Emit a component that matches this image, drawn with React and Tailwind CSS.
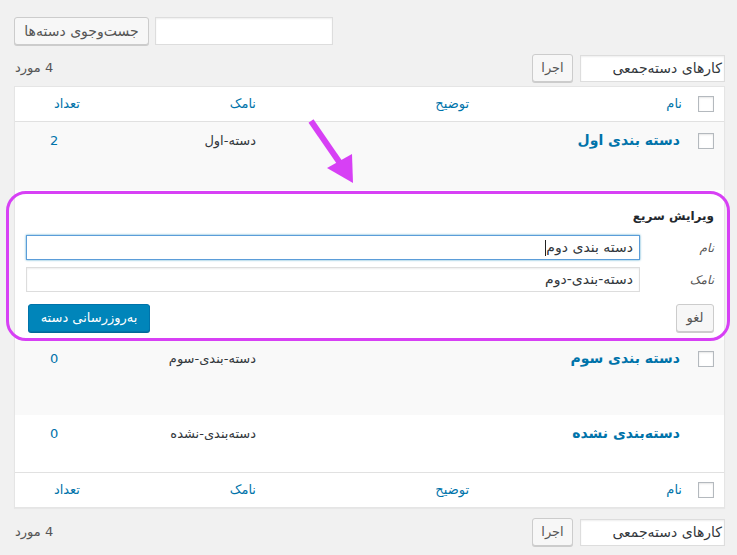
import React from 'react';

const rowGrid = 'grid grid-cols-[35px_210px_213px_176px_1fr]';

function Checkbox() {
  return <span className="block w-[16px] h-[16px] border border-[#b4b9be] bg-white shadow-[inset_0_1px_2px_rgba(0,0,0,0.1)]" />;
}

function HeaderRow({ top }) {
  return (
    <div className={`${rowGrid} h-[35px] items-center text-[13px] text-[#0073aa] ${top ? 'border-b border-[#e1e1e1]' : 'border-t border-[#e1e1e1]'}`}>
      <div className="pr-[10px]"><Checkbox /></div>
      <div className="pr-[7px]">نام</div>
      <div className="pr-[10px]">توضیح</div>
      <div className="pr-[10px]">نامک</div>
      <div className="pr-[10px]">تعداد</div>
    </div>
  );
}

function TermRow({ name, slug, count, bg, height, checkbox = true }) {
  return (
    <div className={`${rowGrid} ${bg} ${height}`}>
      <div className="pr-[10px] pt-[11px]">{checkbox && <Checkbox />}</div>
      <div className="pr-[9px] pt-[8px] text-[14px] font-bold text-[#0073aa]">{name}</div>
      <div />
      <div className="pr-[10px] pt-[9px] text-[13px] text-[#32373c]">{slug}</div>
      <div className="pr-[10px] pt-[9px] text-[13px] text-[#0073aa] text-left pl-[35px]">{count}</div>
    </div>
  );
}

function Tablenav() {
  return (
    <div className="flex items-center justify-between h-[28px]">
      <div className="flex items-center gap-[7px]">
        <div className="w-[145px] h-[27px] bg-white border border-[#ddd] shadow-[inset_0_1px_2px_rgba(0,0,0,0.07)] pr-[2px] flex items-center text-[14px] text-[#32373c]">
          کارهای دسته‌جمعی
        </div>
        <button className="w-[41px] h-[28px] bg-[#f7f7f7] border border-[#ccc] rounded-[3px] shadow-[0_1px_0_#ccc] text-[13px] text-[#555]">اجرا</button>
      </div>
      <div className="text-[13px] text-[#555] pl-[1px]">4 مورد</div>
    </div>
  );
}

export default function App() {
  return (
    <div dir="rtl" className="relative w-[737px] h-[555px] overflow-hidden bg-[#f1f1f1] font-['DejaVu_Sans',sans-serif] text-[#444]">
      <div className="pr-[12px] pl-[14px] pt-[17px]">
        {/* search */}
        <div className="flex justify-end gap-[6px]">
          <div className="w-[178px] h-[28px] bg-white border border-[#ddd] shadow-[inset_0_1px_2px_rgba(0,0,0,0.07)]" />
          <button className="w-[135px] h-[28px] bg-[#f7f7f7] border border-[#ccc] rounded-[3px] shadow-[0_1px_0_#ccc] text-[14px] text-[#555]">
            جست‌وجوی دسته‌ها
          </button>
        </div>

        <div className="mt-[9px]"><Tablenav /></div>

        {/* table */}
        <div className="mt-[4px] bg-white border border-[#e5e5e5] shadow-[0_1px_1px_rgba(0,0,0,0.04)]">
          <HeaderRow top />
          <TermRow name="دسته بندی اول" slug="دسته-اول" count="2" bg="bg-[#f9f9f9]" height="h-[68px]" />

          {/* quick edit */}
          <div className="h-[150px] bg-white pr-[10px] pl-[11px] pt-[17px]">
            <div className="text-[12px] font-bold text-[#23282d] h-[20px]">ویرایش سریع</div>
            <div className="mt-[8px] flex flex-col gap-[7px]">
              <div className="flex items-center">
                <div className="w-[74px] text-[12px] italic text-[#555]">نام</div>
                <div className="flex-1 h-[25px] bg-white border border-[#5b9dd9] shadow-[0_0_2px_rgba(30,140,190,0.8)] flex items-center pr-[6px] text-[14px] text-[#32373c]">
                  دسته بندی دوم<span className="inline-block w-px h-[16px] bg-[#222]" />
                </div>
              </div>
              <div className="flex items-center">
                <div className="w-[74px] text-[12px] italic text-[#555]">نامک</div>
                <div className="flex-1 h-[25px] bg-white border border-[#ddd] shadow-[inset_0_1px_2px_rgba(0,0,0,0.07)] flex items-center pr-[6px] text-[14px] text-[#32373c]">
                  دسته-بندی-دوم
                </div>
              </div>
            </div>
            <div className="mt-[12px] flex justify-between pl-[2px]">
              <button className="w-[38px] h-[28px] bg-[#f7f7f7] border border-[#ccc] rounded-[3px] shadow-[0_1px_0_#ccc] text-[13px] text-[#555]">لغو</button>
              <button className="w-[122px] h-[28px] bg-[#0085ba] border border-[#0073aa] rounded-[3px] shadow-[0_1px_0_#006799] text-[13px] text-white">به‌روزرسانی دسته</button>
            </div>
          </div>

          <TermRow name="دسته بندی سوم" slug="دسته-بندی-سوم" count="0" bg="bg-[#f9f9f9]" height="h-[75px]" />
          <TermRow name="دسته‌بندی نشده" slug="دسته‌بندی-نشده" count="0" bg="bg-white" height="h-[57px]" checkbox={false} />
          <HeaderRow />
        </div>

        <div className="mt-[10px]"><Tablenav /></div>
      </div>

      {/* annotation overlay */}
      <div className="absolute left-[6px] top-[191px] w-[724px] h-[150px] border-[3px] border-[#d740f5] rounded-[20px] pointer-events-none" />
      <svg className="absolute left-0 top-0 pointer-events-none" width="737" height="555">
        <line x1="311" y1="121" x2="342" y2="166" stroke="#d740f5" strokeWidth="6" />
        <polygon points="327,168 352,154 353,183" fill="#d740f5" />
      </svg>
    </div>
  );
}
